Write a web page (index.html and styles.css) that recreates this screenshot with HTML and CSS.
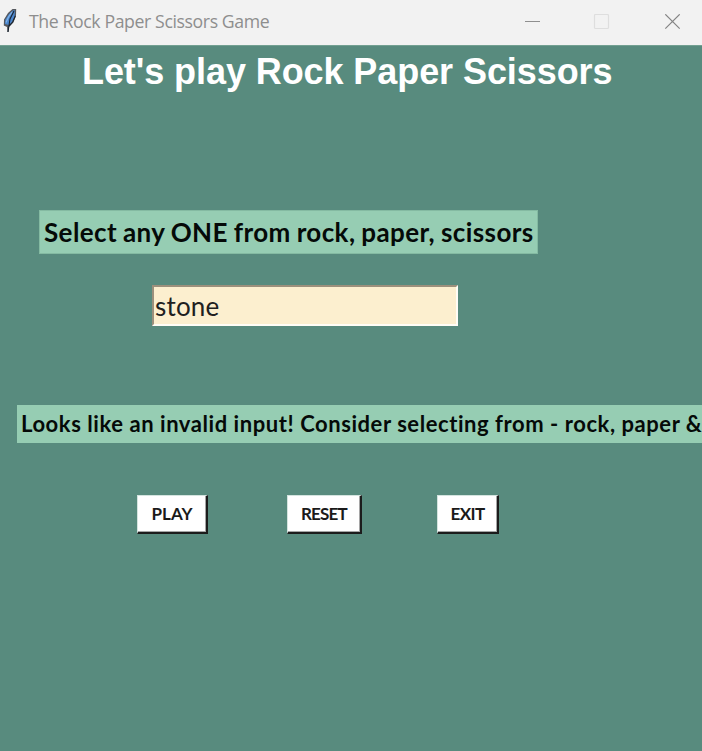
FILE: index.html
```html
<!DOCTYPE html>
<html lang="en">
<head>
<meta charset="utf-8">
<title>The Rock Paper Scissors Game</title>
<link rel="stylesheet" href="styles.css">
</head>
<body>
<header class="titlebar">
  <svg class="feather" width="18" height="26" viewBox="0 0 18 26">
    <path d="M12.5 1 16.2 1 16 8 13.4 14.5 9 19 8.5 24 7.4 24 7 19 3.8 17.5 4 11.5 8 5Z" fill="#55585e"/>
    <path d="M13.2 2.2 15 2.5 14.6 8 12 14 8.8 17 5 16 5.5 11.5 9 6Z" fill="#4b87cf"/>
    <path d="M12 4 8.5 9 6 14.5" fill="none" stroke="#83b4e8" stroke-width="1.2"/>
    <path d="M14 3 10 11 8 24M15.3 8l-2.6 6-3.5 3.8" fill="none" stroke="#18222e" stroke-width="1.1"/>
  </svg>
  <span class="caption">The Rock Paper Scissors Game</span>
  <svg class="controls" width="156" height="16" viewBox="0 0 156 16" fill="none">
    <path d="M0 7.5h15" stroke="#8f8f8f"/>
    <rect x="69.5" y=".5" width="14" height="14" rx="1" stroke="#dedede" stroke-width="1.2"/>
    <path d="M140.3.3l14.4 14.4M154.7.3l-14.4 14.4" stroke="#858585" stroke-width="1.2"/>
  </svg>
</header>
<main class="window">
  <h1 class="heading">Let's play Rock Paper Scissors</h1>
  <div class="prompt"><span>Select any ONE from rock, paper, scissors</span></div>
  <input class="entry" type="text" value="stone" aria-label="Choice">
  <div class="result"><span>Looks like an invalid input! Consider selecting from - rock, paper &amp;</span></div>
  <div class="buttons">
    <button class="play">PLAY</button>
    <button class="reset">RESET</button>
    <button class="exit">EXIT</button>
  </div>
</main>
</body>
</html>
```
FILE: styles.css
```css
* { box-sizing: border-box; }
body {
  margin: 0;
  height: 751px;
  overflow: hidden;
  background: #588b7e;
  font-family: Lato, "Liberation Sans", sans-serif;
}
.titlebar {
  display: flex;
  height: 45px;
  background: #f2f2f2;
}
.feather { margin-top: 8px; }
.caption {
  margin: 8px 0 0 11px;
  width: 484px;
  font: 17.7px/26px "Open Sans", sans-serif;
  letter-spacing: -0.4px;
  color: #8e8e8e;
  white-space: nowrap;
}
.controls { margin-left: 12px; margin-top: 14px; }
.window {
  display: flex;
  flex-direction: column;
  align-items: flex-start;
  height: 706px;
  border-top: 1px solid #73a092;
  overflow: hidden;
}
.heading {
  margin: 6px 0 0 82px;
  font: bold 36px/40px "Liberation Sans", sans-serif;
  letter-spacing: -0.08px;
  color: #fff;
  white-space: nowrap;
}
.prompt, .result {
  flex: none;
  background: #96cdb3;
  color: #050a08;
  font-weight: bold;
  white-space: nowrap;
}
.prompt {
  width: 499px;
  height: 44px;
  margin: 118px 0 0 39px;
  padding-left: 4px;
  border: 1px solid #84baa2;
  font-size: 26px;
  letter-spacing: 0.4px;
  word-spacing: -0.8px;
  line-height: 43px;
}
.entry {
  width: 306px;
  height: 41px;
  margin: 31px 0 0 152px;
  padding: 0 0 0 1px;
  border: solid;
  border-color: #9c907c #fffdf6 #fffdf6 #9c907c;
  border-width: 2px;
  border-radius: 0;
  outline: none;
  background: #fcefcf;
  color: #202020;
  font: 26px/36px Lato, sans-serif;
  letter-spacing: 0.2px;
}
.result {
  width: 685px;
  height: 38px;
  margin: 79px 0 0 17px;
  padding-left: 4px;
  font-size: 22px;
  letter-spacing: 0.56px;
  line-height: 38px;
}
.buttons { display: flex; margin: 52px 0 0 137px; }
.buttons button {
  height: 39px;
  padding: 0;
  border: solid;
  border-width: 1px 2px 2px 1px;
  border-color: #d4e4df #1c1c1c #1c1c1c #d4e4df;
  border-radius: 0;
  box-shadow: inset -1px -1px #a5a5a5;
  background: #fff;
  color: #1a1a1a;
  font: bold 17px/34px Lato, sans-serif;
}
.buttons .play { width: 71px; }
.buttons .reset { width: 75px; margin-left: 79px; letter-spacing: -0.8px; }
.buttons .exit { width: 62px; margin-left: 75px; letter-spacing: -0.6px; }
```
